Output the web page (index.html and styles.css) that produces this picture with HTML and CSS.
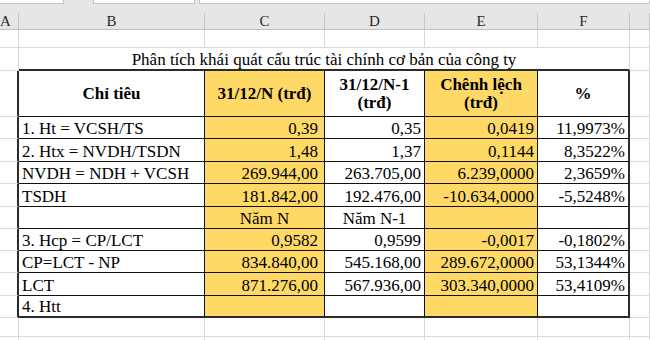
FILE: index.html
```html
<!DOCTYPE html>
<html lang="vi">
<head>
<meta charset="utf-8">
<title>Phân tích khái quát cấu trúc tài chính</title>
<link rel="stylesheet" href="styles.css">
</head>
<body>
<div class="top">
  <div class="box namebox"></div>
  <div class="box fxbox"></div>
  <div class="box formula"></div>
</div>
<div class="sheet">
  <!-- column headers -->
  <div class="h ha">A</div>
  <div class="h">B</div>
  <div class="h">C</div>
  <div class="h">D</div>
  <div class="h">E</div>
  <div class="h">F</div>
  <div class="h"></div>

  <!-- row 1 -->
  <div class="g"></div><div class="g"></div><div class="g"></div><div class="g"></div><div class="g"></div><div class="g"></div><div class="g"></div>

  <!-- row 2 title -->
  <div class="g"></div>
  <div class="title">Phân tích khái quát cấu trúc tài chính cơ bản của công ty</div>
  <div class="g"></div>

  <!-- row 3 header -->
  <div class="g la"></div>
  <div class="t hd">Chỉ tiêu</div>
  <div class="t hd y">31/12/N (trđ)</div>
  <div class="t hd"><span>31/12/N-1<br>(trđ)</span></div>
  <div class="t hd y"><span>Chênh lệch<br>(trđ)</span></div>
  <div class="t hd lc">%</div>
  <div class="g"></div>

  <div class="g la"></div>
  <div class="t l">1. Ht = VCSH/TS</div>
  <div class="t r y rc">0,39</div>
  <div class="t r">0,35</div>
  <div class="t r y">0,0419</div>
  <div class="t r lc">11,9973%</div>
  <div class="g"></div>

  <div class="g la"></div>
  <div class="t l">2. Htx = NVDH/TSDN</div>
  <div class="t r y rc">1,48</div>
  <div class="t r">1,37</div>
  <div class="t r y">0,1144</div>
  <div class="t r lc">8,3522%</div>
  <div class="g"></div>

  <div class="g la"></div>
  <div class="t l">NVDH = NDH + VCSH</div>
  <div class="t r y rc">269.944,00</div>
  <div class="t r">263.705,00</div>
  <div class="t r y">6.239,0000</div>
  <div class="t r lc">2,3659%</div>
  <div class="g"></div>

  <div class="g la"></div>
  <div class="t l">TSDH</div>
  <div class="t r y rc">181.842,00</div>
  <div class="t r">192.476,00</div>
  <div class="t r y">-10.634,0000</div>
  <div class="t r lc">-5,5248%</div>
  <div class="g"></div>

  <div class="g la"></div>
  <div class="t l"></div>
  <div class="t c y">Năm N</div>
  <div class="t c">Năm N-1</div>
  <div class="t r y"></div>
  <div class="t r lc"></div>
  <div class="g"></div>

  <div class="g la"></div>
  <div class="t l">3. Hcp = CP/LCT</div>
  <div class="t r y rc">0,9582</div>
  <div class="t r">0,9599</div>
  <div class="t r y">-0,0017</div>
  <div class="t r lc">-0,1802%</div>
  <div class="g"></div>

  <div class="g la"></div>
  <div class="t l">CP=LCT - NP</div>
  <div class="t r y rc">834.840,00</div>
  <div class="t r">545.168,00</div>
  <div class="t r y">289.672,0000</div>
  <div class="t r lc">53,1344%</div>
  <div class="g"></div>

  <div class="g la"></div>
  <div class="t l">LCT</div>
  <div class="t r y rc">871.276,00</div>
  <div class="t r">567.936,00</div>
  <div class="t r y">303.340,0000</div>
  <div class="t r lc">53,4109%</div>
  <div class="g"></div>

  <div class="g la"></div>
  <div class="t l lr">4. Htt</div>
  <div class="t r y rc lr"></div>
  <div class="t r lr"></div>
  <div class="t r y lr"></div>
  <div class="t r lc lr"></div>
  <div class="g"></div>

  <!-- trailing rows -->
  <div class="g"></div><div class="g"></div><div class="g"></div><div class="g"></div><div class="g"></div><div class="g"></div><div class="g"></div>
  <div class="g"></div><div class="g"></div><div class="g"></div><div class="g"></div><div class="g"></div><div class="g"></div><div class="g"></div>
</div>
</body>
</html>
```

FILE: styles.css
```css
html, body {
  margin: 0;
  padding: 0;
  background: #ffffff;
  overflow: hidden;
}

body {
  width: 650px;
  height: 340px;
  font-family: "Liberation Serif", "Times New Roman", serif;
  color: #000;
}

.top {
  height: 13px;
  background: #e6e6e6;
  display: flex;
  align-items: flex-start;
}

.box {
  height: 3px;
  background: #ffffff;
  border-bottom: 1px solid #c6c6c6;
  border-right: 1px solid #c6c6c6;
}

.namebox { width: 63px; }
.fxbox { width: 100px; margin-left: 29px; border-left: 1px solid #c6c6c6; }
.formula { flex: 1; margin-left: 4px; border-left: 1px solid #c6c6c6; }

.sheet {
  display: grid;
  grid-template-columns: 19px 186px 120px 100px 113px 92px 20px;
  grid-template-rows: 17px 18px 23px 46px 22px 23px 22px 23px 22px 22px 22px 23px 22px 19px 20px;
}

.sheet > div {
  box-sizing: border-box;
  overflow: hidden;
  white-space: nowrap;
  font-size: 17px;
  line-height: 18px;
}

.h {
  background: #e6e6e6;
  border-right: 1px solid #c8c8c8;
  border-bottom: 1px solid #c0c0c0;
  display: flex;
  align-items: center;
  justify-content: center;
  font-size: 15px !important;
  color: #2a2a2a;
}

.ha {
  padding-right: 7px;
}

.g {
  border-right: 1px solid #dadada;
  border-bottom: 1px solid #dadada;
}

.la {
  border-right: 2px solid #2b2b2b;
}

.title {
  grid-column: 2 / 7;
  border-right: 1px solid #dadada;
  border-bottom: 2px solid #2b2b2b;
  display: flex;
  align-items: flex-end;
  justify-content: center;
}

.t {
  border-right: 1px solid #111;
  border-bottom: 1px solid #111;
  display: flex;
  align-items: flex-end;
  padding: 0 3px;
}

.y { background: #ffd966; }

.l { justify-content: flex-start; }
.r { justify-content: flex-end; }
.c { justify-content: center; }
.rc { padding-right: 6px; }

.hd {
  font-weight: bold;
  align-items: center;
  justify-content: center;
  text-align: center;
}

.lc { border-right: 2px solid #2b2b2b; }
.lr { border-bottom: 2px solid #2b2b2b; }
```
